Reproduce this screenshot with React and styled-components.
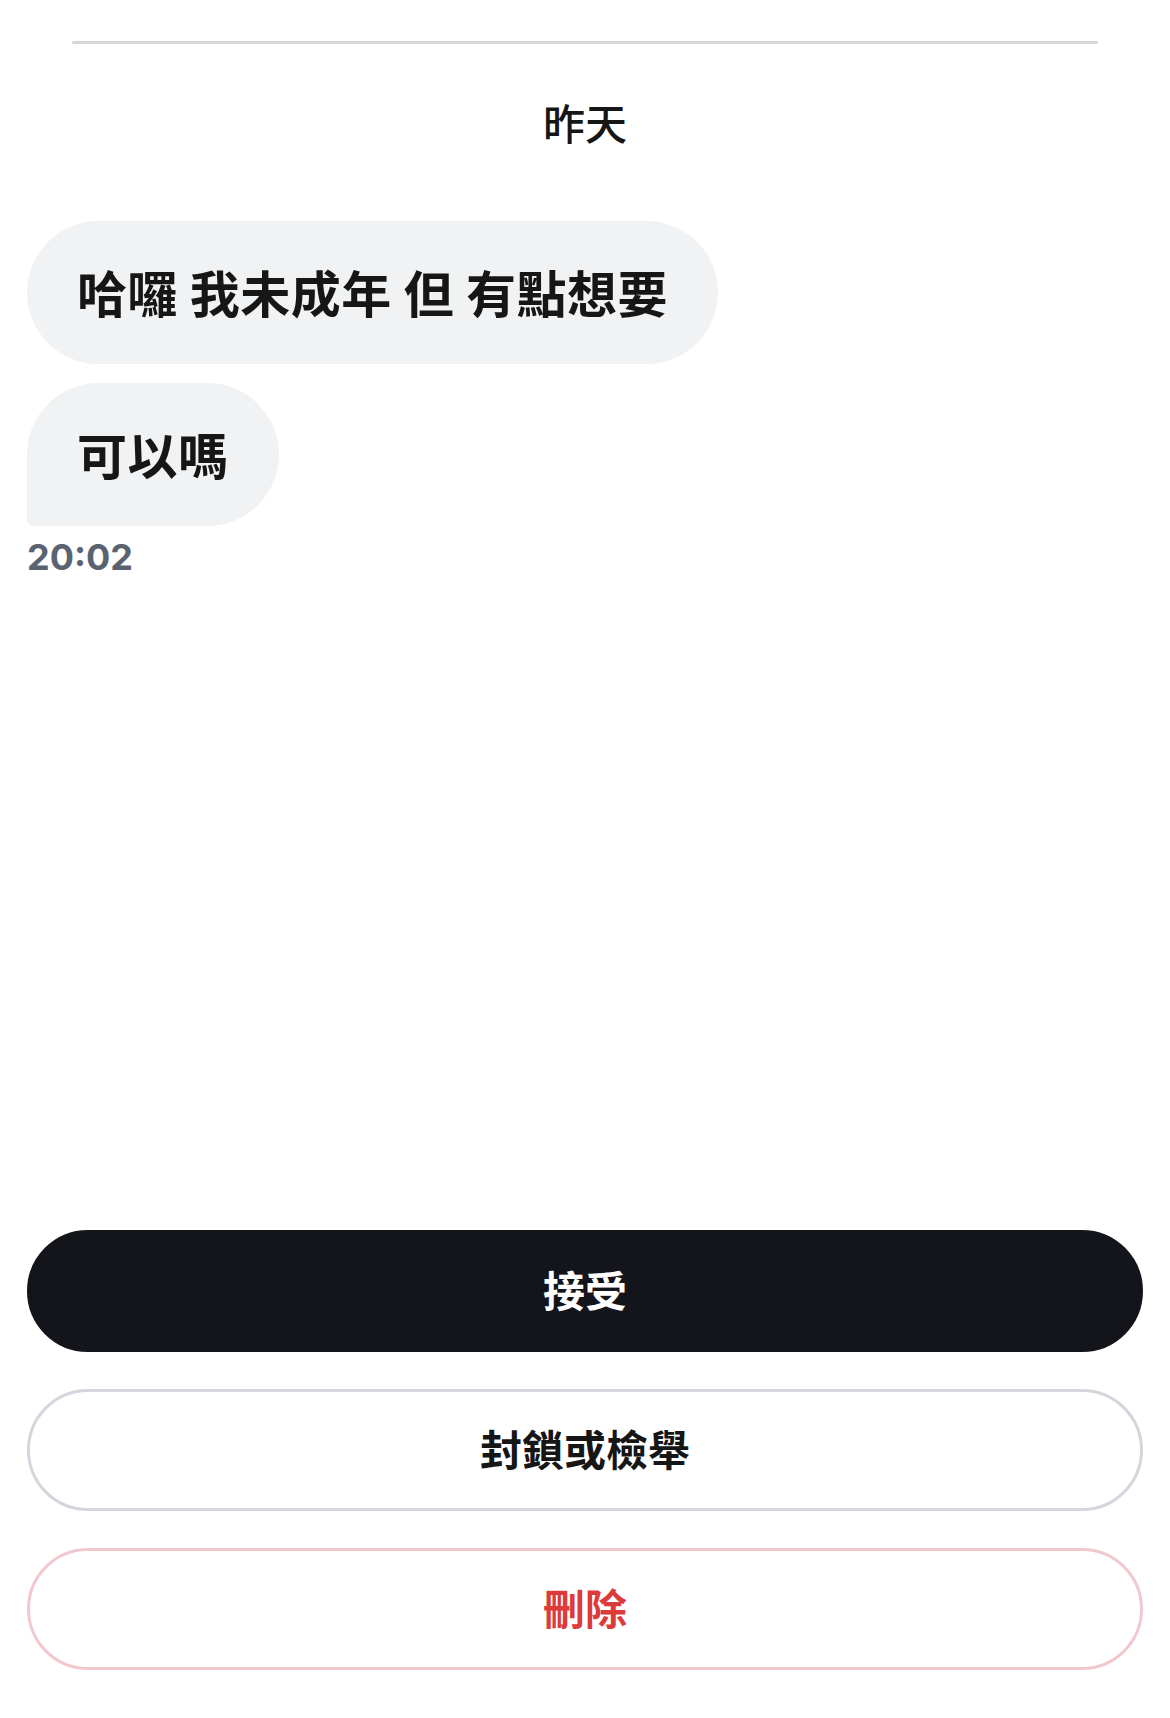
import React from "react";
import styled, { createGlobalStyle } from "styled-components";

const GlobalStyle = createGlobalStyle`
  html, body { margin: 0; padding: 0; background: #ffffff; }
  body { font-family: "Noto Sans CJK TC", "Noto Sans", sans-serif; }
  * { box-sizing: border-box; }
`;

const Page = styled.div`
  width: 1170px;
  height: 1718px;
  display: flex;
  flex-direction: column;
  padding: 0 27px 48px;
  background: #ffffff;
`;

const Divider = styled.div`
  margin: 41px 45px 0;
  height: 3px;
  background: #d6d6da;
  border-radius: 2px;
`;

const DateLabel = styled.div`
  margin-top: 48px;
  text-align: center;
  font-size: 42px;
  line-height: 60px;
  font-weight: 500;
  color: #161616;
`;

const Thread = styled.div`
  margin-top: 69px;
  display: flex;
  flex-direction: column;
  align-items: flex-start;
  gap: 19px;
`;

const Bubble = styled.div`
  height: 143px;
  display: flex;
  align-items: center;
  padding: 0 50px 4px;
  background: #f1f2f4;
  border-radius: 72px 72px 72px ${(p) => (p.$last ? "6px" : "72px")};
  font-size: 50px;
  letter-spacing: 0.5px;
  font-weight: 700;
  color: #161616;
  white-space: pre;
`;

const Time = styled.div`
  margin-top: 11px;
  font-family: Inter, "Liberation Sans", sans-serif;
  font-size: 36px;
  line-height: 40px;
  font-weight: 700;
  color: #5b6370;
`;

const Spacer = styled.div`
  flex: 1;
`;

const Actions = styled.div`
  display: flex;
  flex-direction: column;
  gap: 37px;
`;

const variants = {
  primary: { bg: "#13151b", border: "#13151b", color: "#ffffff" },
  outline: { bg: "#ffffff", border: "#d3d6dc", color: "#161616" },
  danger: { bg: "#ffffff", border: "#f2c8cf", color: "#dc3b3b" },
};

const ActionButton = styled.button`
  height: 122px;
  width: 100%;
  border-radius: 61px;
  border: 3px solid ${(p) => variants[p.$variant].border};
  background: ${(p) => variants[p.$variant].bg};
  color: ${(p) => variants[p.$variant].color};
  font-family: "Noto Sans CJK TC", "Noto Sans", sans-serif;
  font-size: 42px;
  font-weight: 700;
  display: flex;
  align-items: center;
  justify-content: center;
  padding: 0 0 5px;
  cursor: pointer;
`;

export default function App() {
  return (
    <>
      <GlobalStyle />
      <Page>
        <Divider />
        <DateLabel>昨天</DateLabel>
        <Thread>
          <Bubble>哈囉 我未成年 但 有點想要</Bubble>
          <Bubble $last>可以嗎</Bubble>
        </Thread>
        <Time>20:02</Time>
        <Spacer />
        <Actions>
          <ActionButton $variant="primary">接受</ActionButton>
          <ActionButton $variant="outline">封鎖或檢舉</ActionButton>
          <ActionButton $variant="danger">刪除</ActionButton>
        </Actions>
      </Page>
    </>
  );
}
